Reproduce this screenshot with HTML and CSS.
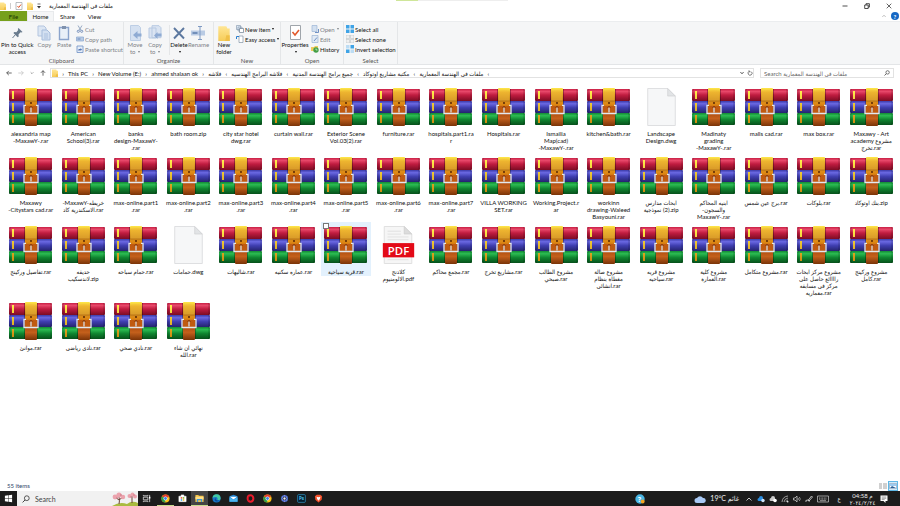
FILE: index.html
```html
<!DOCTYPE html>
<html lang="en">
<head>
<meta charset="utf-8">
<title>ملفات فى الهندسة المعمارية</title>
<link rel="stylesheet" href="styles.css">
</head>
<body>
<svg class="sprite" aria-hidden="true">
  <defs>
    <linearGradient id="red" x2="0" y2="1"><stop offset="0" stop-color="#c81f44"/><stop offset=".2" stop-color="#e8486a"/><stop offset=".5" stop-color="#c01c40"/><stop offset="1" stop-color="#7c0c24"/></linearGradient>
    <linearGradient id="blue" x2="0" y2="1"><stop offset="0" stop-color="#3b3aa8"/><stop offset=".22" stop-color="#6a68e2"/><stop offset=".55" stop-color="#3f3eb0"/><stop offset="1" stop-color="#25246e"/></linearGradient>
    <linearGradient id="green" x2="0" y2="1"><stop offset="0" stop-color="#128a34"/><stop offset=".22" stop-color="#2bbb52"/><stop offset=".55" stop-color="#0f8530"/><stop offset="1" stop-color="#07501b"/></linearGradient>
    <linearGradient id="strap" x2="0" y2="1"><stop offset="0" stop-color="#ffe94a"/><stop offset=".12" stop-color="#e9b02a"/><stop offset=".3" stop-color="#cf8f22"/><stop offset=".42" stop-color="#e08a14"/><stop offset=".62" stop-color="#a8480c"/><stop offset=".8" stop-color="#c4601c"/><stop offset="1" stop-color="#7a3408"/></linearGradient>
    <linearGradient id="gold" x2="0" y2="1"><stop offset="0" stop-color="#fff04c"/><stop offset="1" stop-color="#d08a10"/></linearGradient>
    <linearGradient id="folder" x2="0" y2="1"><stop offset="0" stop-color="#ffe694"/><stop offset="1" stop-color="#f6cc58"/></linearGradient>
  </defs>
  <symbol id="rar" viewBox="0 0 43 38">
    <rect y="1" width="43" height="12" rx="1" fill="url(#red)"/>
    <rect y="13" width="43" height="12" rx="1" fill="url(#blue)"/>
    <rect y="25" width="43" height="12" rx="1" fill="url(#green)"/>
    <path d="M1 1v36M42 1v36" stroke="#000" stroke-opacity=".22"/>
    <path d="M15.500 1v36M28.500 1v36" stroke="#000" stroke-opacity=".3"/>
    <path d="M3 3h2v8H3zM3 15h2v8H3zM3 27h2v8H3z" fill="url(#gold)"/>
    <rect x="16" width="12" height="38" rx="1" fill="url(#strap)"/>
    <path d="M17 4q5-4 10 0v9H17z" fill="#f4b93a" fill-opacity=".35"/>
    <path d="M16 13h12" stroke="#9c5c10" stroke-width=".6"/>
    <circle cx="22" cy="15" r=".9" fill="#4a1c04"/>
    <rect x="15.500" y="18" width="13" height="7.500" fill="#c05a10"/>
    <path d="M17 17.300h-2v8.200h14v-8.200h-2" fill="none" stroke="#e3e8ee" stroke-width="1.300"/>
    <path d="M22 19.500v5" stroke="#d5dce4" stroke-width="1.300"/>
    <path d="M20.500 19.500q1.500-2 3 0" fill="none" stroke="#5c2406" stroke-width=".7"/>
  </symbol>
  <symbol id="page" viewBox="0 0 30 40">
    <path d="M.5.500h21l8 8v31H.5z" fill="#f6f7f8" stroke="#dcdddf"/>
    <path d="M21.500.500v8h8z" fill="#e2e4e6" stroke="#c9cbcd" stroke-width=".6"/>
  </symbol>
  <symbol id="folder-icon" viewBox="0 0 10 14"><path d="M0 1h7l1 2h2v11H0z" fill="url(#folder)"/><path d="M7 9h3v5H6z" fill="#f0c048"/></symbol>
  <symbol id="chrome" viewBox="0 0 10 10">
    <circle cx="5" cy="5" r="4.500" fill="#fbc116"/><path d="M5 5L1.100 2.700A4.500 4.500 0 0 1 9 3z" fill="#e33b2e"/><path d="M5 5L1.100 2.700A4.500 4.500 0 0 0 4.700 9.500z" fill="#2da14c"/><circle cx="5" cy="5" r="2.200" fill="#fff"/><circle cx="5" cy="5" r="1.600" fill="#3f7fe8"/>
  </symbol>
  <symbol id="copy" viewBox="0 0 14 16"><path d="M1 1h6l2 2v8H1z" fill="#dce6f3" stroke="#b3c5df"/><path d="M5 5h5l3 3v7H5z" fill="#d3e0f1" stroke="#a6bcdb"/><path d="M7 9h4M7 11h4M7 13h4" stroke="#9bb3d6" stroke-width=".7"/></symbol>
  <symbol id="grid" viewBox="0 0 8 8"><path d="M0 0h3.500v3.500H0zM4.500 0H8v3.500H4.500zM0 4.500h3.500V8H0zM4.500 4.500H8V8H4.500z"/></symbol>
</svg>

<header class="titlebar">
  <svg class="i8" viewBox="0 0 10 14" preserveAspectRatio="none"><use href="#folder-icon"/></svg>
  <i class="bar"></i>
  <svg class="i8" viewBox="0 0 8 8"><path d="M1 .5h6v7H1z" fill="#fff" stroke="#9aa0a6" stroke-width=".7"/><path d="M2.500 4l1.200 1.500L6 2.500" fill="none" stroke="#e0562c"/></svg>
  <svg class="i6" viewBox="0 0 10 14" preserveAspectRatio="none"><use href="#folder-icon"/></svg>
  <svg class="i4" viewBox="0 0 4 6"><path d="M.5 1h3" stroke="#333" stroke-width=".7"/><path d="M0 3h4L2 5.500z" fill="#333"/></svg>
  <h1>ملفات فى الهندسة المعمارية</h1>
  <div class="topmark"><i></i></div>
  <div class="winbuttons">
    <button aria-label="Minimize"><svg viewBox="0 0 6 6"><path d="M.5 3h5" stroke="#222" stroke-width=".8"/></svg></button>
    <button aria-label="Restore"><svg viewBox="0 0 6 6"><path d="M.7 2h3.500v3.500H.7zM2 2V.7h3.400v3.400H4.200" fill="none" stroke="#222" stroke-width=".8"/></svg></button>
    <button aria-label="Close"><svg viewBox="0 0 6 6"><path d="M.7.700l4.600 4.600M5.300.700L.7 5.300" stroke="#222" stroke-width=".7"/></svg></button>
  </div>
</header>

<nav class="tabs">
  <button class="tab file-tab">File</button>
  <button class="tab active">Home</button>
  <button class="tab">Share</button>
  <button class="tab">View</button>
  <span class="tabs-end">
    <svg class="i4" viewBox="0 0 4 4"><path d="M.3 3L2 1.200 3.700 3" fill="none" stroke="#999" stroke-width=".6"/></svg>
    <button class="help" aria-label="Help">?</button>
  </span>
</nav>

<section class="ribbon">
  <div class="group clipboard">
    <div class="tools">
      <button class="big wide"><svg viewBox="0 0 14 16"><path d="M8.500 3l4 4-1 .6-1-.3-2 2.200.2 2-1 .8-4.300-4.300 1-1 2 .2L8.200 5l-.4-1z" fill="#697b8d"/><path d="M5.500 9.500L2.500 13" stroke="#697b8d"/></svg>Pin to Quick<br>access</button>
      <button class="big off"><svg><use href="#copy"/></svg>Copy</button>
      <button class="big off"><svg viewBox="0 0 14 16"><path d="M2.500 2.500h9v12h-9z" fill="#e9f0f8" stroke="#8ba4cc" stroke-width="1.400"/><path d="M5 1h4v3H5z" fill="#8092ad"/></svg>Paste</button>
      <div class="stack">
        <button class="small off"><svg viewBox="0 0 8 8"><path d="M2 .5l3 5M6 .5L3 5.500" stroke="#8197b8" stroke-width=".8"/><circle cx="2.300" cy="6.300" r="1.100" fill="none" stroke="#6583b4" stroke-width=".8"/><circle cx="5.700" cy="6.300" r="1.100" fill="none" stroke="#6583b4" stroke-width=".8"/></svg>Cut</button>
        <button class="small off"><svg viewBox="0 0 8 8"><path d="M.5 2h7v4h-7z" fill="#b8cbe5" stroke="#8aa6cf" stroke-width=".7"/><path d="M1.500 4h3" stroke="#5878ae" stroke-width=".8"/></svg>Copy path</button>
        <button class="small off"><svg viewBox="0 0 8 8"><path d="M1 1h6v6.500H1z" fill="#e5edf7" stroke="#7c9aca" stroke-width=".9"/><path d="M2.500 6V4h2V3l1.500 1.500L4.500 6V5z" fill="#5477b4"/></svg>Paste shortcut</button>
      </div>
    </div>
    <h2>Clipboard</h2>
  </div>
  <div class="group organize">
    <div class="tools">
      <button class="big off"><svg viewBox="0 0 14 16"><path d="M2.500.500h8l2 2v13h-10z" fill="#d5e1f1" stroke="#bdcee5"/><path d="M13.500 8.500v3H9.500V14L5 10l4.500-4v2.500z" fill="#8fabd3"/></svg>Move<br>to <i class="caret"></i></button>
      <button class="big off"><svg viewBox="0 0 14 16"><path d="M1 3h7v10H1zM4 .7h7l2 2v10H4z" fill="#dae4f2" stroke="#b7c9e2"/><path d="M13.500 8.500v3H9.500V14L6 10.500 9.500 7v1.500z" fill="#8fabd3"/></svg>Copy<br>to <i class="caret"></i></button>
      <i class="divider"></i>
      <button class="big"><svg viewBox="0 0 14 16"><path d="M2 3l10 10.500M12 3L2 13.500" stroke="#5c789f" stroke-width="1.900"/></svg>Delete<br><i class="caret"></i></button>
      <button class="big off"><svg viewBox="0 0 14 16"><path d="M0 5.500h14v5H0z" fill="#b9cbe4"/><path d="M1.500 8h5" stroke="#5b7bad" stroke-width="1.500"/><path d="M7 1.500h4M7 14.500h4M9 1.500v13" stroke="#7f9ac3" fill="none"/></svg>Rename</button>
    </div>
    <h2>Organize</h2>
  </div>
  <div class="group new">
    <div class="tools">
      <button class="big"><svg><use href="#folder-icon"/></svg>New<br>folder</button>
      <div class="stack">
        <button class="small"><svg viewBox="0 0 8 8"><path d="M.5.500h4v4h-4zM2 2h4v4H2z" fill="#dfeaf5" stroke="#7d92a8" stroke-width=".6"/><path d="M3.500 3.500h4v4h-4z" fill="#fff" stroke="#546a80" stroke-width=".6"/></svg>New item <i class="caret"></i></button>
        <button class="small"><svg viewBox="0 0 8 8"><path d="M3 1h4v6.500H3z" fill="#fff" stroke="#6e8499" stroke-width=".6"/><path d="M.5 4V1.500H3" fill="none" stroke="#2a7fd0"/></svg>Easy access <i class="caret"></i></button>
      </div>
    </div>
    <h2>New</h2>
  </div>
  <div class="group open">
    <div class="tools">
      <button class="big wide"><svg viewBox="0 0 14 16"><path d="M2.500.500h10v14h-10z" fill="#fff" stroke="#9fa5ab"/><path d="M4.500 7l2.500 3 4-5" fill="none" stroke="#e25a2c" stroke-width="1.600"/></svg>Properties<br><i class="caret"></i></button>
      <div class="stack">
        <button class="small off"><svg viewBox="0 0 8 8"><path d="M1 .5h5v6H1z" fill="#d3e0f0" stroke="#9bb4d6" stroke-width=".7"/><path d="M7.500 4v3.500H4" fill="none" stroke="#6f90c4"/></svg>Open <i class="caret"></i></button>
        <button class="small off"><svg viewBox="0 0 8 8"><path d="M1 .5h6v7H1z" fill="#e1eaf5" stroke="#9bb4d6" stroke-width=".7"/><path d="M3 6l3-3.500" stroke="#6f90c4"/></svg>Edit</button>
        <button class="small"><svg viewBox="0 0 8 8"><path d="M0 2h3l1-1h3v5H0z" fill="#f0cc60"/><circle cx="5" cy="5" r="2.700" fill="#43a047"/><path d="M5 3.500V5h1.500" stroke="#fff" stroke-width=".6" fill="none"/></svg>History</button>
      </div>
    </div>
    <h2>Open</h2>
  </div>
  <div class="group select">
    <div class="tools">
      <div class="stack">
        <button class="small"><svg fill="#3fa3e6"><use href="#grid"/></svg>Select all</button>
        <button class="small"><svg fill="#f0f0f0" stroke="#b5babf" stroke-width=".5"><use href="#grid"/></svg>Select none</button>
        <button class="small"><svg viewBox="0 0 8 8"><path d="M0 0h3.500v3.500H0zM4.500 4.500H8V8H4.500z" fill="#bcdcf4"/><path d="M4.500 0H8v3.500H4.500zM0 4.500h3.500V8H0z" fill="#3fa3e6"/></svg>Invert selection</button>
      </div>
    </div>
    <h2>Select</h2>
  </div>
</section>

<section class="address">
  <div class="arrows">
    <button aria-label="Back"><svg viewBox="0 0 6 6"><path d="M5.700 3H.7M2.800.900L.7 3l2.100 2.100" fill="none" stroke="#444" stroke-width=".8"/></svg></button>
    <button aria-label="Forward"><svg viewBox="0 0 6 6"><path d="M.3 3h5M3.200.900L5.300 3 3.200 5.100" fill="none" stroke="#c4c4c4" stroke-width=".8"/></svg></button>
    <button class="tiny" aria-label="Recent"><svg viewBox="0 0 6 6"><path d="M1 2l2 2 2-2" fill="none" stroke="#666" stroke-width=".9"/></svg></button>
    <button aria-label="Up"><svg viewBox="0 0 6 6"><path d="M3 5.700V.7M.9 2.800L3 .7l2.100 2.100" fill="none" stroke="#444" stroke-width=".8"/></svg></button>
  </div>
  <div class="path">
    <svg class="i6" viewBox="0 0 10 14" preserveAspectRatio="none"><use href="#folder-icon"/></svg>
    <i>›</i><a href="#">This PC</a><i>›</i><a href="#">New Volume (E:)</a><i>›</i><a href="#">ahmed shalaan ok</a><i>›</i><a href="#">فلاشه</a><i>‹</i><a href="#">فلاشه البرامج الهندسيه</a><i>‹</i><a href="#">جميع برامج الهندسة المدنية</a><i>‹</i><a href="#">مكتبة مشاريع اوتوكاد</a><i>‹</i><a href="#">ملفات فى الهندسة المعمارية</a><i>‹</i>
    <span class="path-end">
      <svg class="i4" viewBox="0 0 4 4"><path d="M.4 1l1.600 1.800L3.600 1" fill="none" stroke="#333" stroke-width=".8"/></svg>
      <svg class="i6" viewBox="0 0 6 6"><path d="M4.500 1.800A2 2 0 1 1 2 1.500M2 .3v1.500h1.500" fill="none" stroke="#444" stroke-width=".7"/></svg>
    </span>
  </div>
  <div class="search">
    <input type="search" aria-label="Search folder" placeholder="Search ملفات فى الهندسة المعمارية">
    <svg class="i6" viewBox="0 0 6 6"><circle cx="3.600" cy="2.400" r="1.700" fill="none" stroke="#444" stroke-width=".7"/><path d="M2.300 3.700L.5 5.500" stroke="#444" stroke-width=".8"/></svg>
  </div>
</section>

<main>
<ul class="files">
  <li><svg><use href="#rar"/></svg><span>alexandria map<br>-MaxawY-.rar</span></li>
  <li><svg><use href="#rar"/></svg><span>American<br>School(3).rar</span></li>
  <li><svg><use href="#rar"/></svg><span>banks<br>design-MaxawY-<br>.rar</span></li>
  <li><svg><use href="#rar"/></svg><span>bath room.zip</span></li>
  <li><svg><use href="#rar"/></svg><span>city star hotel<br>dwg.rar</span></li>
  <li><svg><use href="#rar"/></svg><span>curtain wall.rar</span></li>
  <li><svg><use href="#rar"/></svg><span>Exterior Scene<br>Vol.03(2).rar</span></li>
  <li><svg><use href="#rar"/></svg><span>furniture.rar</span></li>
  <li><svg><use href="#rar"/></svg><span>hospitals.part1.ra<br>r</span></li>
  <li><svg><use href="#rar"/></svg><span>Hospitals.rar</span></li>
  <li><svg><use href="#rar"/></svg><span>Ismailia<br>Map(cad)<br>-MaxawY-.rar</span></li>
  <li><svg><use href="#rar"/></svg><span>kitchen&amp;bath.rar</span></li>
  <li><svg><use href="#page"/></svg><span>Landscape<br>Design.dwg</span></li>
  <li><svg><use href="#rar"/></svg><span>Madinaty<br>grading<br>-MaxawY-.rar</span></li>
  <li><svg><use href="#rar"/></svg><span>malls cad.rar</span></li>
  <li><svg><use href="#rar"/></svg><span>max box.rar</span></li>
  <li><svg><use href="#rar"/></svg><span>Maxawy - Art<br>academy مشروع<br>تخرج.rar</span></li>

  <li><svg><use href="#rar"/></svg><span>Maxawy<br>-Citystars cad.rar</span></li>
  <li><svg><use href="#rar"/></svg><span>-MaxawY-خريطه<br>الاسكندرية كاد.rar</span></li>
  <li><svg><use href="#rar"/></svg><span>max-online.part1<br>.rar</span></li>
  <li><svg><use href="#rar"/></svg><span>max-online.part2<br>.rar</span></li>
  <li><svg><use href="#rar"/></svg><span>max-online.part3<br>.rar</span></li>
  <li><svg><use href="#rar"/></svg><span>max-online.part4<br>.rar</span></li>
  <li><svg><use href="#rar"/></svg><span>max-online.part5<br>.rar</span></li>
  <li><svg><use href="#rar"/></svg><span>max-online.part6<br>.rar</span></li>
  <li><svg><use href="#rar"/></svg><span>max-online.part7<br>.rar</span></li>
  <li><svg><use href="#rar"/></svg><span>VILLA WORKING<br>SET.rar</span></li>
  <li><svg><use href="#rar"/></svg><span>Working.Project.r<br>ar</span></li>
  <li><svg><use href="#rar"/></svg><span>workinn<br>drawing-Waleed<br>Basyouni.rar</span></li>
  <li><svg><use href="#rar"/></svg><span>ابحاث مدارس<br>&rlm;(2) نموذجية.zip</span></li>
  <li><svg><use href="#rar"/></svg><span>ابنيه المحاكم<br>-والسجون<br>MaxawY-.rar</span></li>
  <li><svg><use href="#rar"/></svg><span>برج عين شمس.rar</span></li>
  <li><svg><use href="#rar"/></svg><span>بلوكات.rar</span></li>
  <li><svg><use href="#rar"/></svg><span>بنك اوتوكاد.zip</span></li>

  <li><svg><use href="#rar"/></svg><span>تفاصيل وركينج.rar</span></li>
  <li><svg><use href="#rar"/></svg><span>حديقه<br>لاندسكيب.zip</span></li>
  <li><svg><use href="#rar"/></svg><span>حمام سباحه.rar</span></li>
  <li><svg><use href="#page"/></svg><span>حمامات.dwg</span></li>
  <li><svg><use href="#rar"/></svg><span>شاليهات.rar</span></li>
  <li><svg><use href="#rar"/></svg><span>عماره سكنيه.rar</span></li>
  <li class="hover"><input type="checkbox" aria-label="قرية سياحية.rar"><svg><use href="#rar"/></svg><span>قرية سياحية.rar</span></li>
  <li>
    <svg viewBox="0 0 33 40">
      <path d="M1.500.500h21l8 8v31h-29z" fill="#f6f6f6" stroke="#dedede"/>
      <path d="M22.500.500v8h8z" fill="#dcdcdc" stroke="#c8c8c8" stroke-width=".6"/>
      <path d="M5 5.500h14M5 8.500h14M5 11.500h22M5 14.500h22M5 35.500h22" stroke="#e0e0e0"/>
      <rect y="18" width="33" height="15" fill="#e30a17"/>
      <text x="16.500" y="30" text-anchor="middle" class="pdf-text">PDF</text>
    </svg>
    <span>كلادنج<br>الالومنيوم.pdf</span>
  </li>
  <li><svg><use href="#rar"/></svg><span>مجمع محاكم.rar</span></li>
  <li><svg><use href="#rar"/></svg><span>مشاريع تخرج.rar</span></li>
  <li><svg><use href="#rar"/></svg><span>مشروع الطالب<br>صبحي.rar</span></li>
  <li><svg><use href="#rar"/></svg><span>مشروع صالة<br>مغطاة بنظام<br>انشائى.rar</span></li>
  <li><svg><use href="#rar"/></svg><span>مشروع قريه<br>سياحيه.rar</span></li>
  <li><svg><use href="#rar"/></svg><span>مشروع كلية<br>العمارة.rar</span></li>
  <li><svg><use href="#rar"/></svg><span>مشروع متكامل.rar</span></li>
  <li><svg><use href="#rar"/></svg><span>مشروع مركز ابحاث<br>راااائع حاصل على<br>مركز فى مسابقه<br>معماريه.rar</span></li>
  <li><svg><use href="#rar"/></svg><span>مشروع وركينج<br>كامل.rar</span></li>

  <li><svg><use href="#rar"/></svg><span>موانئ.rar</span></li>
  <li><svg><use href="#rar"/></svg><span>نادى رياضى.rar</span></li>
  <li><svg><use href="#rar"/></svg><span>نادي صحي.rar</span></li>
  <li><svg><use href="#rar"/></svg><span>نهائي ان شاء<br>الله.rar</span></li>
</ul>
</main>

<div class="status">
  <span>55 items</span>
  <span class="views">
    <button aria-label="Details"><svg viewBox="0 0 8 6"><path d="M0 1h3M4 1h4M0 3h3M4 3h4M0 5h3M4 5h4" stroke="#8c8c8c" stroke-width=".8"/></svg></button>
    <button class="on" aria-label="Large icons"><svg viewBox="0 0 8 6"><path d="M.5.500h7v5h-7z" fill="#fff" stroke="#7a9bb8" stroke-width=".6"/><path d="M1 5l2-2 4 2z" fill="#2b5f94"/><path d="M1 1h6v2H1z" fill="#9ccbf0"/></svg></button>
  </span>
</div>

<footer class="taskbar">
  <button class="app" aria-label="Start"><svg viewBox="0 0 10 10"><path d="M1 2l3.500-.5v3.200H1zM5 1.400L9 .8v3.900H5zM1 5.300h3.500v3.200L1 8zM5 5.300h4v3.900L5 8.600z" fill="#fff"/></svg></button>
  <label class="tasksearch">
    <svg class="i8" viewBox="0 0 8 8"><circle cx="4.800" cy="3.200" r="2.400" fill="none" stroke="#333" stroke-width=".8"/><path d="M3 5L.6 7.400" stroke="#333" stroke-width=".9"/></svg>
    <input type="text" placeholder="Search" aria-label="Search">
    <svg class="blossom" viewBox="0 0 26 15"><path d="M0 15q8-5 15-2 5-4 11-1v3z" fill="#a9bb3f"/><path d="M7 13q1-4 0-7M7 9L3 6M7 9l4-3M20 12V5" stroke="#6b4339" fill="none"/><g fill="#eba3ad"><circle cx="3" cy="6" r="2.400"/><circle cx="7" cy="4" r="2.600"/><circle cx="11" cy="6" r="2.200"/><circle cx="17.500" cy="5" r="2"/><circle cx="20.500" cy="3.500" r="2"/><circle cx="23" cy="5.500" r="2"/></g><g fill="#c96d7c"><circle cx="5" cy="7" r=".8"/><circle cx="9" cy="4" r=".8"/><circle cx="19" cy="6" r=".7"/><circle cx="22" cy="4" r=".7"/></g></svg>
  </label>
  <button class="app taskview" aria-label="Task view"><svg viewBox="0 0 10 10"><path d="M1.500 3.500h5v3h-5zM1.500 1v1h5V1M1.500 9V8h5v1M8.500 1v8" fill="none" stroke="#ddd" stroke-width=".9"/><path d="M7.800 3h1.500v2H7.800z" fill="#fff"/></svg></button>
  <button class="app running" aria-label="Chrome"><svg><use href="#chrome"/></svg></button>
  <button class="app" aria-label="Store"><svg viewBox="0 0 10 10"><path d="M1 2.500h8v6H1zM3.500 2.500V1h3v1.500" fill="#fff" stroke="#fff" stroke-width=".6"/><path d="M3 3.500h1.700v1.700H3z" fill="#e94f31"/><path d="M5.300 3.500H7v1.700H5.300z" fill="#7cb72c"/><path d="M3 5.800h1.700v1.700H3z" fill="#2a9fe6"/><path d="M5.300 5.800H7v1.700H5.300z" fill="#f6b71e"/></svg></button>
  <button class="app running current" aria-label="File Explorer"><svg viewBox="0 0 10 10"><path d="M.5 1h3l1 1h5v7h-9z" fill="#f5c444"/><path d="M.5 3h9v3h-9z" fill="#ffe08a"/><path d="M2 9V5.500h6V9H6.500V7h-3v2z" fill="#3d95d8"/></svg></button>
  <button class="app" aria-label="Edge"><svg viewBox="0 0 10 10"><circle cx="5" cy="5" r="4.500" fill="#1976c8"/><path d="M.7 4.500A4.400 4.400 0 0 1 9.500 5c0 2-3 2.200-3.500 1 .7-1.500-.5-2.700-2-2.600S1 4 .7 4.500z" fill="#42c9a4"/><path d="M4 4.500Q3.500 7.500 8 7.500 6 9 4 8 2 6.500 4 4.500z" fill="#0d4b94"/></svg></button>
  <button class="app" aria-label="Mail"><svg viewBox="0 0 10 10"><path d="M.5 2.500L5 .8l4.500 1.700V8.500h-9z" fill="#1f86d6"/><path d="M1 3h8L5 6z" fill="#fff"/><path d="M.5 3.500L5 6.500l4.500-3v5h-9z" fill="#4bb4ef"/></svg></button>
  <button class="app" aria-label="Opera"><svg viewBox="0 0 10 10"><ellipse cx="5" cy="5" rx="3.200" ry="3.500" fill="none" stroke="#ea1c2c" stroke-width="2.200"/><path d="M3.300 2.500q-1.300 2.500 0 5" fill="none" stroke="#b0101c"/></svg></button>
  <button class="app" aria-label="Chrome profile"><svg><use href="#chrome"/></svg></button>
  <button class="app" aria-label="Recorder"><svg viewBox="0 0 10 10"><circle cx="5" cy="5" r="3" fill="none" stroke="#4b74d6" stroke-width="1.800"/><path d="M5 1v2M2 3l1.500 1M2 7l1.500-1M5 9V7M8 7L6.500 6M8 3L6.500 4" stroke="#9c8be6" stroke-width=".8"/><circle cx="5" cy="5" r="1.300" fill="#e8ecfa"/></svg></button>
  <button class="app" aria-label="Photoshop"><svg viewBox="0 0 10 10"><rect x=".7" y=".7" width="8.600" height="8.600" rx="1" fill="#061e2e" stroke="#35a6d8" stroke-width=".7"/><text x="5" y="7" text-anchor="middle" class="ps-text">Ps</text></svg></button>
  <button class="app" aria-label="Brave"><svg viewBox="0 0 10 10"><path d="M3 .7h4l2 1.800-.5 4L5 9.500l-3.500-3-.5-4z" fill="#f4502a"/><path d="M2.800 3l2.200.5L7.200 3 6.500 5.500 5 7.500 3.500 5.500z" fill="#fff"/></svg></button>

  <div class="tray">
    <svg class="support" viewBox="0 0 10 10"><circle cx="5" cy="5" r="4.700" fill="#49b6e4"/><text x="4.500" y="7.500" text-anchor="middle" class="q-text">?</text><circle cx="7.700" cy="7.500" r="1.900" fill="#f5a623"/></svg>
    <svg class="weather-icon" viewBox="0 0 12 8"><path d="M3 8a2.500 2.500 0 0 1 0-5A3.500 3.500 0 0 1 9 3a2.500 2.500 0 0 1 .5 5z" fill="#a9c9f5"/></svg>
    <span class="weather">19°C <bdi>غائم</bdi></span>
    <svg class="t" viewBox="0 0 8 8"><path d="M1.500 5.500L4 3l2.500 2.500" fill="none" stroke="#eee" stroke-width=".8"/></svg>
    <svg class="t" viewBox="0 0 8 8"><path d="M2 6a1.500 1.500 0 0 1 0-3 2 2 0 0 1 4 0v3z" fill="#2c8ee0"/><circle cx="6" cy="5.500" r="1.700" fill="#cfe6fa"/></svg>
    <svg class="t" viewBox="0 0 8 8"><path d="M2 6a1.500 1.500 0 0 1 0-3 2 2 0 0 1 4 0v3z" fill="#ccc"/><circle cx="6" cy="5.500" r="1.800" fill="#fff"/></svg>
    <svg class="t" viewBox="0 0 8 8"><path d="M1 7Q1.500 1.500 7 1M3 7q.5-3.500 4-4M5 7q.3-1.700 2-2" fill="none" stroke="#aaa" stroke-width=".9"/><circle cx="6.700" cy="6.700" r=".8" fill="#fff"/></svg>
    <svg class="t" viewBox="0 0 8 8"><path d="M.5 3h1.500L4 1v6L2 5H.5z" fill="none" stroke="#ddd" stroke-width=".7"/><path d="M5 3q1 1 0 2M6.300 2q2 2 0 4" fill="none" stroke="#ddd" stroke-width=".6"/></svg>
    <svg class="t" viewBox="0 0 8 8"><path d="M1 7Q0 5 2.500 5t2 1.500M3 5.500L6.500 1l1 1L4 6z" fill="none" stroke="#ddd" stroke-width=".8"/></svg>
    <svg class="kb" viewBox="0 0 12 8"><path d="M.5 1h11v6H.5z" fill="none" stroke="#ccc" stroke-width=".7"/><path d="M2 3h8M2 4.200h8" stroke="#ccc" stroke-width=".7" stroke-dasharray="1 .6"/><path d="M3 5.700h6" stroke="#ccc" stroke-width=".7"/></svg>
    <span class="lang">ع</span>
    <span class="clock">04:58 م<br>٢٠٢٤/٢/٢٤</span>
    <svg class="notify" viewBox="0 0 8 8"><path d="M.5.500h7v5.500H5.500V8l-2-2h-3z" fill="#fff"/><path d="M1.700 2h4.600M1.700 3.300h4.600M1.700 4.600h3" stroke="#444" stroke-width=".5"/></svg>
  </div>
</footer>
</body>
</html>
```

FILE: styles.css
```css
* { box-sizing: border-box; }

body {
  margin: 0;
  min-height: 100vh;
  display: flex;
  flex-direction: column;
  background: #fff;
  color: #111;
  font: 6px/7px Lato, "DejaVu Sans Condensed", "DejaVu Sans", sans-serif;
}

button, input {
  font: inherit;
  color: inherit;
  margin: 0;
  padding: 0;
  border: 0;
  background: none;
}

h1, h2 { margin: 0; font: inherit; }
i { font-style: normal; }
a { color: inherit; text-decoration: none; }
svg { display: block; flex: none; }

.sprite { position: absolute; width: 0; height: 0; }
.i8 { width: 8px; height: 8px; }
.i6 { width: 6px; height: 8px; }
.i4 { width: 4px; height: 6px; }

/* Title bar */
.titlebar {
  position: relative;
  display: flex;
  align-items: center;
  gap: 4px;
  height: 11px;
  padding-right: 8px;
}
.titlebar .i8:first-child { width: 6px; }
.titlebar h1 { margin-left: 4px; }
.bar { width: 1px; height: 6px; background: #ccc; }
.topmark {
  position: absolute;
  top: 0;
  left: 44%;
  width: 112px;
  height: 1px;
  background: #eee;
}
.topmark i { display: block; width: 22px; height: 1px; background: #cfe69a; }
.winbuttons { display: flex; gap: 16px; margin-left: auto; }
.winbuttons button { width: 6px; }
.winbuttons svg { width: 6px; height: 6px; }

/* Tabs */
.tabs { display: flex; height: 10px; align-items: stretch; }
.tab { width: 27px; line-height: 9px; text-align: center; }
.file-tab { background: #76a01c; color: #183000; }
.active { background: #f5f6f7; border: 1px solid #e8eaec; border-bottom: 0; }
.tabs-end { display: flex; align-items: center; gap: 5px; margin-left: auto; padding-right: 1px; }
.help {
  width: 8px;
  height: 8px;
  border-radius: 50%;
  background: #1567c4;
  color: #fff;
  font-weight: 700;
  text-align: center;
}

/* Ribbon */
.ribbon {
  display: flex;
  height: 44px;
  background: #f5f6f7;
  border-top: 1px solid #ebedef;
  border-bottom: 1px solid #e3e5e7;
}
.group {
  display: flex;
  flex-direction: column;
  justify-content: space-between;
  border-right: 1px solid #e4e6e8;
}
.group h2 { text-align: center; color: #555; }
.clipboard { width: 124px; }
.organize { width: 90px; }
.new { width: 67px; }
.open { width: 63px; }
.select { width: 54px; }
.tools { display: flex; align-items: flex-start; }
.big {
  width: 20px;
  text-align: center;
  white-space: nowrap;
  padding-top: 3px;
}
.big svg { width: 14px; height: 16px; margin: 0 auto; }
.off { color: #7d8186; }
.divider { width: 1px; height: 30px; margin: 3px 0 0 4px; background: #e4e6e8; }
.divider + .big { width: 18px; }
.wide { width: 28px; }
.clipboard .wide { width: 35px; }
.organize .tools { padding-left: 1px; }
.stack { display: flex; flex-direction: column; padding: 3px 0 0 2px; gap: 2px; }
.small { display: flex; align-items: center; gap: 1px; height: 8px; white-space: nowrap; }
.small svg { width: 8px; height: 8px; }
.caret {
  display: inline-block;
  margin-left: 1px;
  border: 1px solid transparent;
  border-top: 2px solid currentColor;
  border-bottom: 0;
  vertical-align: middle;
}

/* Address row */
.address { display: flex; align-items: center; gap: 6px; height: 16px; padding: 0 6px; }
.arrows { display: flex; justify-content: space-between; width: 40px; }
.arrows button { width: 6px; }
.arrows .tiny { width: 4px; }
.arrows svg { width: 100%; height: 6px; }
.path, .search { display: flex; align-items: center; height: 10px; border: 1px solid #e2e2e2; }
.path { flex: 1; margin-left: -2px; padding-left: 1px; white-space: nowrap; }
.path > i { width: 10px; text-align: center; }
.path-end { display: flex; align-items: center; gap: 3px; margin-left: auto; }
.search { width: 134px; padding: 0 3px; }
.search input { flex: 1; min-width: 0; outline: 0; }
.search input::placeholder { color: #666; }

/* Files */
main { flex: 1; }
.files {
  display: grid;
  grid-template-columns: repeat(auto-fill, minmax(49px, 1fr));
  align-items: start;
  gap: 1px 3px;
  margin: 0;
  padding: 3px 4px 0 6px;
  list-style: none;
  text-align: center;
  white-space: nowrap;
}
.files li {
  position: relative;
  display: flex;
  flex-direction: column;
  align-items: center;
  padding: 4px 0 1px;
}
.files svg { width: 43px; height: 38px; margin-bottom: 4px; }
.files .hover { background: #e3f1fd; }
.files input {
  position: absolute;
  top: 1px;
  left: 2px;
  width: 6px;
  height: 6px;
  appearance: none;
  background: #fff;
  border: 1px solid #777;
}
.pdf-text { font: 600 12px "Open Sans", sans-serif; fill: #fff; }

/* Status */
.status { display: flex; align-items: center; height: 11px; padding: 0 2px 0 7px; color: #2b4468; }
.views { display: flex; margin-left: auto; }
.views button { display: grid; place-items: center; width: 10px; height: 10px; }
.views svg { width: 8px; height: 6px; }
.views .on { background: #d3ecfa; border: 1px solid #5fb7e5; }

/* Taskbar */
.taskbar { display: flex; align-items: stretch; height: 15px; background: #1c1c1c; color: #eee; }
.app { display: grid; place-items: center; flex: 0 1 17px; border-bottom: 1px solid transparent; }
.app svg { width: 9px; height: 9px; }
.taskview { margin-right: 2px; }
.running { border-color: #c6dc8c; }
.current { background: #444; }
.tasksearch {
  display: flex;
  align-items: center;
  gap: 5px;
  width: 121px;
  padding-left: 5px;
  background: #f1f1f1;
  color: #333;
}
.tasksearch input { flex: 1; min-width: 0; font-size: 7px; outline: 0; }
.tasksearch input::placeholder { color: #444; }
.blossom { width: 26px; height: 15px; }
.ps-text { font: 700 5px "Open Sans", sans-serif; fill: #4bc0f0; }
.q-text { font: 700 7px "Open Sans", sans-serif; fill: #fff; }
.tray { display: flex; align-items: center; gap: 4px; margin-left: auto; padding-right: 12px; }
.support { width: 10px; height: 10px; margin-right: 45px; }
.weather-icon { width: 12px; height: 8px; }
.weather { font-size: 7px; margin-right: 2px; white-space: nowrap; }
.t { width: 8px; height: 8px; }
.kb { width: 12px; height: 8px; }
.lang { width: 12px; text-align: center; }
.clock { width: 27px; text-align: center; white-space: nowrap; }
.notify { width: 8px; height: 8px; }
```
